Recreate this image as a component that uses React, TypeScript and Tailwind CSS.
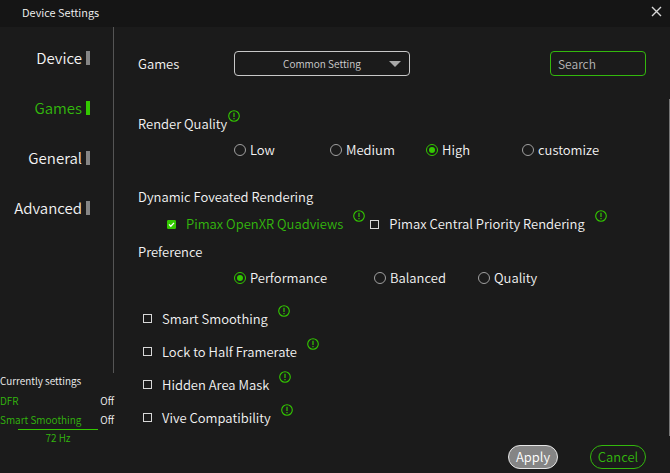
import { useState } from 'react';
import { clsx } from 'clsx';

const TABS = ['Device', 'Games', 'General', 'Advanced'];

const QUALITY_LEVELS = ['Low', 'Medium', 'High', 'customize'];

const PREFERENCES = [
  { name: 'Performance', width: 'w-[140px]' },
  { name: 'Balanced', width: 'w-[104px]' },
  { name: 'Quality', width: 'w-[104px]' },
];

const TOGGLES = ['Smart Smoothing', 'Lock to Half Framerate', 'Hidden Area Mask', 'Vive Compatibility'];

const STATUS = [
  { name: 'DFR', value: 'Off' },
  { name: 'Smart Smoothing', value: 'Off' },
];

function InfoButton({ topic }: { topic: string }) {
  return (
    <button type="button" aria-label={`About ${topic}`} className="mb-4 shrink-0 text-[#33c800]">
      <svg width="12" height="12" viewBox="0 0 12 12" fill="none" stroke="currentColor" className="block">
        <circle cx="6" cy="6" r="5.3" strokeWidth="1.1" />
        <path d="M6 2.8v4.1M6 7.9v1.3" strokeWidth="1.2" />
      </svg>
    </button>
  );
}

interface RadioProps {
  group: string;
  name: string;
  checked: boolean;
  onSelect: () => void;
}

function Radio({ group, name, checked, onSelect }: RadioProps) {
  return (
    <label className="flex items-center gap-1 whitespace-nowrap">
      <span className="grid size-3 shrink-0 place-items-center">
        <input
          type="radio"
          name={group}
          checked={checked}
          onChange={onSelect}
          className="col-start-1 row-start-1 size-3 appearance-none rounded-full border border-[#a0a0a0] checked:border-[#33c800]"
        />
        {checked && <span className="pointer-events-none col-start-1 row-start-1 size-1.5 rounded-full bg-[#33c800]" />}
      </span>
      {name}
    </label>
  );
}

interface CheckProps {
  name: string;
  checked: boolean;
  onToggle: () => void;
}

function Check({ name, checked, onToggle }: CheckProps) {
  return (
    <div className="flex items-center gap-[10px]">
      <label className={clsx('flex items-center gap-[10px] whitespace-nowrap', checked && 'text-[#33b80d]')}>
        <span className="grid size-[9px] shrink-0">
          <input
            type="checkbox"
            checked={checked}
            onChange={onToggle}
            className="col-start-1 row-start-1 size-[9px] appearance-none border border-[#d8d8d8] checked:rounded-[1px] checked:border-[#33c800] checked:bg-[#33c800]"
          />
          {checked && (
            <svg
              viewBox="0 0 9 9"
              fill="none"
              stroke="#fff"
              strokeWidth="1.3"
              className="pointer-events-none col-start-1 row-start-1 size-[9px]"
            >
              <path d="M2 4.4l1.8 1.8 3.2-3.3" />
            </svg>
          )}
        </span>
        {name}
      </label>
      <InfoButton topic={name} />
    </div>
  );
}

export default function App() {
  const [tab, setTab] = useState('Games');
  const [quality, setQuality] = useState('High');
  const [preference, setPreference] = useState('Performance');
  const [enabled, setEnabled] = useState<string[]>(['Pimax OpenXR Quadviews']);

  const toggle = (name: string) =>
    setEnabled(prev => (prev.includes(name) ? prev.filter(item => item !== name) : [...prev, name]));

  return (
    <div className="flex min-h-screen flex-col bg-[#1b1b1b] font-['Noto_Sans_CJK_SC',sans-serif] text-[13px] leading-5 font-[350] text-[#f4f4f4]">
      <header className="flex h-[27px] items-center justify-between bg-[#151515] pr-2 pb-1 pl-[22px]">
        <h1 className="text-[11px] leading-4">Device Settings</h1>
        <button type="button" aria-label="Close">
          <svg width="11" height="11" viewBox="0 0 11 11" stroke="#d8d8d8" strokeWidth="1.4" className="block">
            <path d="M1 1l9 9M10 1l-9 9" />
          </svg>
        </button>
      </header>

      <div className="flex flex-1">
        <aside className="flex w-[114px] shrink-0 flex-col">
          <nav className="flex flex-1 flex-col border-r border-[#555] pt-[6px]">
            {TABS.map(name => (
              <button
                key={name}
                type="button"
                onClick={() => setTab(name)}
                className={clsx(
                  'flex h-[50px] items-center justify-end gap-1 pr-[23px] text-[15px]',
                  tab === name && 'text-[#33b80d]',
                )}
              >
                {name}
                <span className={clsx('h-[14px] w-1', tab === name ? 'bg-[#33c800]' : 'bg-[#858585]')} />
              </button>
            ))}
          </nav>

          {/* live values of the headset */}
          <section className="h-[100px] text-[10px]">
            <h2 className="h-[18px] leading-4">Currently settings</h2>
            <dl>
              {STATUS.map(item => (
                <div key={item.name} className="flex h-[19px] items-center justify-between">
                  <dt className="text-[#33b80d]">{item.name}</dt>
                  <dd>{item.value}</dd>
                </div>
              ))}
            </dl>
            <p className="ml-[18px] w-20 border-t border-[#33c800] text-center leading-4 text-[#33b80d]">72 Hz</p>
          </section>
        </aside>

        <main className="flex flex-1 flex-col">
          <div className="flex h-[72px] items-center pt-px pr-6 pl-6">
            <label htmlFor="game" className="w-24">
              Games
            </label>
            <div className="grid w-44 items-center">
              <select
                id="game"
                className="col-start-1 row-start-1 h-[25px] appearance-none rounded border border-[#c8c8c8] bg-transparent text-center text-[10px] text-[#d0d0d0] [text-align-last:center]"
              >
                <option>Common Setting</option>
              </select>
              <svg
                width="12"
                height="6"
                viewBox="0 0 12 6"
                fill="#a8a8a8"
                className="pointer-events-none col-start-1 row-start-1 mr-[9px] justify-self-end"
              >
                <path d="M0 0h12L6 6z" />
              </svg>
            </div>
            <input
              type="search"
              aria-label="Search"
              placeholder="Search"
              className="ml-auto h-[25px] w-24 rounded border border-[#33b80d] bg-transparent px-[7px] text-xs outline-none placeholder:text-[#b8b8b8]"
            />
          </div>

          <div className="flex flex-1">
            <div className="flex-1 pt-3 pl-6">
              <div className="flex h-[26px] items-center gap-px">
                <h2 id="quality">Render Quality</h2>
                <InfoButton topic="Render Quality" />
              </div>
              <div role="radiogroup" aria-labelledby="quality" className="ml-24 flex h-[26px] items-center">
                {QUALITY_LEVELS.map(name => (
                  <div key={name} className="w-24">
                    <Radio group="quality" name={name} checked={quality === name} onSelect={() => setQuality(name)} />
                  </div>
                ))}
              </div>

              <h2 className="mt-[21px] h-[26px] leading-[26px]">Dynamic Foveated Rendering</h2>
              <div className="ml-[29px] flex h-7 items-center gap-[5px]">
                {['Pimax OpenXR Quadviews', 'Pimax Central Priority Rendering'].map(name => (
                  <Check key={name} name={name} checked={enabled.includes(name)} onToggle={() => toggle(name)} />
                ))}
              </div>

              <h2 id="preference" className="h-7 leading-7">
                Preference
              </h2>
              <div role="radiogroup" aria-labelledby="preference" className="ml-24 flex h-6 items-center">
                {PREFERENCES.map(item => (
                  <div key={item.name} className={item.width}>
                    <Radio
                      group="preference"
                      name={item.name}
                      checked={preference === item.name}
                      onSelect={() => setPreference(item.name)}
                    />
                  </div>
                ))}
              </div>

              <ul className="mt-3 ml-[5px]">
                {TOGGLES.map(name => (
                  <li key={name} className="flex h-[33px] items-center">
                    <Check name={name} checked={enabled.includes(name)} onToggle={() => toggle(name)} />
                  </li>
                ))}
              </ul>
            </div>
            {/* scroll thumb */}
            <div className="w-px bg-[#777]" />
          </div>

          <footer className="flex justify-end gap-8 pt-[9px] pr-6 pb-1">
            <button
              type="button"
              className="h-6 w-[50px] rounded-full border border-[#e6e6e6] bg-[#858585] leading-5 text-white"
            >
              Apply
            </button>
            <button type="button" className="h-6 w-14 rounded-full border border-[#33b80d] leading-5 text-[#33b80d]">
              Cancel
            </button>
          </footer>
        </main>
      </div>
    </div>
  );
}
